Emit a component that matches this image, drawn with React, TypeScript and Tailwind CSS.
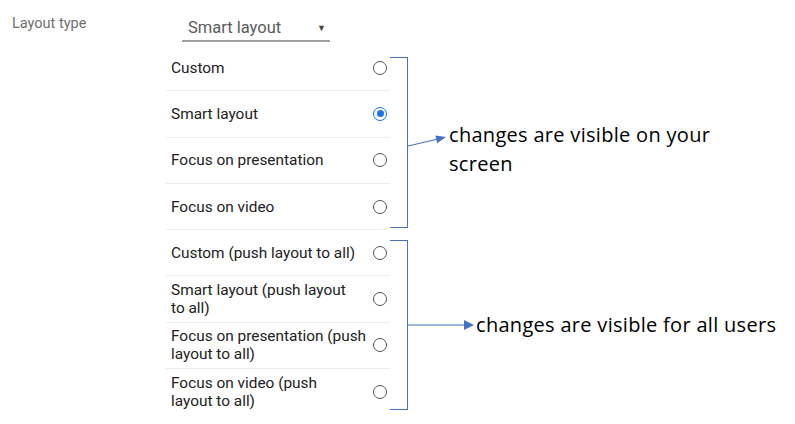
import React from "react";

const items: { lines: string[]; selected?: boolean }[] = [
  { lines: ["Custom"] },
  { lines: ["Smart layout"], selected: true },
  { lines: ["Focus on presentation"] },
  { lines: ["Focus on video"] },
  { lines: ["Custom (push layout to all)"] },
  { lines: ["Smart layout (push layout", "to all)"] },
  { lines: ["Focus on presentation (push", "layout to all)"] },
  { lines: ["Focus on video (push", "layout to all)"] },
];

function Radio({ selected }: { selected?: boolean }) {
  if (selected) {
    return (
      <div className="w-[14px] h-[14px] rounded-full border-[1.5px] border-[#1a73e8] flex items-center justify-center shrink-0">
        <div className="w-[7px] h-[7px] rounded-full bg-[#1a73e8]" />
      </div>
    );
  }
  return <div className="w-[14px] h-[14px] rounded-full border-[1.5px] border-[#555]" />;
}

export default function App() {
  return (
    <div className="w-[795px] h-[424px] bg-white flex overflow-hidden">
      <div className="w-[166px] shrink-0 pl-3 pt-[13px] text-[14.5px] text-[#6f6f6f] font-['Roboto',sans-serif]">
        Layout type
      </div>
      <div className="w-[224px] shrink-0 flex flex-col font-['Roboto',sans-serif]">
        <div className="ml-4 mt-[16px] w-[148px] h-[26px] border-b-2 border-[#a0a0a0] flex items-center justify-between pl-[6px] pr-[4px]">
          <span className="text-[16.5px] text-[#5a5a5a] leading-none">Smart layout</span>
          <span className="text-[9px] text-[#444] leading-none">▼</span>
        </div>
        <div className="mt-[3px] flex flex-col">
          {items.map((it, i) => (
            <div
              key={i}
              className={`h-[46.3px] flex items-center justify-between pl-[5px] pr-[3px] ${
                i < items.length - 1 ? "border-b border-[#eeeeee]" : ""
              }`}
            >
              <div className="text-[15.4px] leading-[18px] text-[#212121]">
                {it.lines.map((l, j) => (
                  <div key={j}>{l}</div>
                ))}
              </div>
              <Radio selected={it.selected} />
            </div>
          ))}
        </div>
      </div>
      <div className="flex flex-col pt-[57px] gap-[12px] font-['Open_Sans',sans-serif] text-black">
        <div className="flex">
          <div className="w-[18px] h-[171px] border-y border-r border-[#4472c4]" />
          <div className="pt-[63px] flex items-start">
            <svg width="41" height="18" viewBox="0 0 41 18" className="mt-[11px] shrink-0">
              <line x1="0" y1="15" x2="30" y2="8" stroke="#4472c4" strokeWidth="1.2" />
              <polygon points="38,6 29.2,12.2 27.4,4.4" fill="#4472c4" />
            </svg>
            <div className="text-[20px] leading-[29px] tracking-[0.3px]">
              <div>changes are visible on your</div>
              <div>screen</div>
            </div>
          </div>
        </div>
        <div className="flex">
          <div className="w-[18px] h-[170px] border-y border-r border-[#4472c4]" />
          <div className="pt-[70px] flex items-start">
            <svg width="68" height="12" viewBox="0 0 68 12" className="mt-[8.5px] shrink-0">
              <line x1="0" y1="6" x2="58" y2="6" stroke="#4472c4" strokeWidth="1.2" />
              <polygon points="66,6 56,1 56,11" fill="#4472c4" />
            </svg>
            <div className="text-[20px] leading-[29px] tracking-[0.3px] whitespace-nowrap">changes are visible for all users</div>
          </div>
        </div>
      </div>
    </div>
  );
}
